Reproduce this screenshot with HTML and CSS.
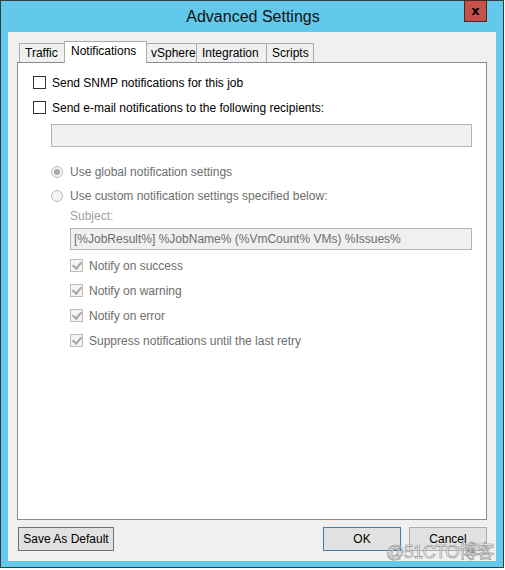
FILE: index.html
```html
<!DOCTYPE html>
<html lang="en">
<head>
  <meta charset="UTF-8" />
  <title>Advanced Settings</title>
  <link rel="stylesheet" href="styles.css">
</head>
<body>
  <div class="window">
    <div class="titlebar">
      <span class="title">Advanced Settings</span>
      <button class="close-btn">x</button>
    </div>

    <div class="client">
      <div class="tabs">
        <div class="tab">Traffic</div>
        <div class="tab active">Notifications</div>
        <div class="tab">vSphere</div>
        <div class="tab">Integration</div>
        <div class="tab">Scripts</div>
      </div>

      <div class="panel">
        <label class="row">
          <span class="check"></span>
          <span>Send SNMP notifications for this job</span>
        </label>
        <label class="row">
          <span class="check"></span>
          <span>Send e-mail notifications to the following recipients:</span>
        </label>
        <div class="textbox recipients"></div>

        <div class="options">
          <label class="row disabled first-radio">
            <span class="radio checked"></span>
            <span>Use global notification settings</span>
          </label>
          <label class="row disabled">
            <span class="radio"></span>
            <span>Use custom notification settings specified below:</span>
          </label>

          <div class="custom">
            <div class="subject-label">Subject:</div>
            <div class="textbox subject">[%JobResult%] %JobName% (%VmCount% VMs) %Issues%</div>
            <div class="checks">
              <label class="row small disabled">
                <span class="check checked"></span>
                <span>Notify on success</span>
              </label>
              <label class="row small disabled">
                <span class="check checked"></span>
                <span>Notify on warning</span>
              </label>
              <label class="row small disabled">
                <span class="check checked"></span>
                <span>Notify on error</span>
              </label>
              <label class="row small disabled">
                <span class="check checked"></span>
                <span>Suppress notifications until the last retry</span>
              </label>
            </div>
          </div>
        </div>
      </div>

      <div class="footer">
        <button class="btn default-btn">Save As Default</button>
        <div class="footer-right">
          <button class="btn primary">OK</button>
          <button class="btn">Cancel</button>
        </div>
      </div>
    </div>

    <div class="watermark">@51CTO博客</div>
  </div>
</body>
</html>
```

FILE: styles.css
```css
* {
  box-sizing: border-box;
}

body {
  margin: 0;
  background: #ffffff;
  font-family: "Liberation Sans", Arial, sans-serif;
  font-size: 12px;
  color: #000;
}

.window {
  position: relative;
  width: 504px;
  height: 568px;
  background: #62c9ea;
  border: 1px solid #2f3d44;
  padding: 0 7px 6px 7px;
  display: flex;
  flex-direction: column;
}

.titlebar {
  position: relative;
  height: 31px;
  display: flex;
  align-items: center;
  justify-content: center;
}

.title {
  font-size: 16px;
  color: #111;
  margin-left: 2px;
  margin-top: 1px;
}

.close-btn {
  position: absolute;
  top: -1px;
  right: 9px;
  width: 23px;
  height: 22px;
  background: #c7514a;
  border: 1px solid #4a2a28;
  color: #000;
  font-family: "DejaVu Sans", sans-serif;
  font-weight: bold;
  font-size: 13px;
  line-height: 16px;
  padding: 0;
}

.client {
  flex: 1;
  background: #f0f0f0;
  padding: 9px 9px 10px 9px;
  display: flex;
  flex-direction: column;
}

/* tabs */
.tabs {
  display: flex;
  align-items: flex-end;
  height: 21px;
  padding-left: 2px;
  position: relative;
  z-index: 1;
}

.tab {
  height: 19px;
  padding: 0 5px;
  border: 1px solid #acacac;
  border-bottom: none;
  border-left: none;
  background: #f0f0f0;
  line-height: 19px;
}

.tab:first-child {
  border-left: 1px solid #acacac;
  width: 46px;
}

.tab:nth-child(3) { width: 51px; }
.tab:nth-child(4) { width: 70px; }
.tab:nth-child(5) { width: 47px; }

.tab.active {
  width: 83px;
  height: 22px;
  margin-bottom: -1px;
  margin-left: -1px;
  margin-right: -1px;
  background: #fff;
  border: 1px solid #acacac;
  border-bottom: none;
  line-height: 18px;
  padding: 0 6px;
  position: relative;
  z-index: 2;
}

.panel {
  flex: 1;
  background: #fff;
  border: 1px solid #898c95;
  padding: 7px 0 0 15px;
}

.row {
  display: flex;
  align-items: center;
  height: 25px;
  gap: 6px;
}

.row.disabled {
  color: #6d6d6d;
}

.check {
  width: 13px;
  height: 13px;
  border: 1px solid #333;
  background: #fff;
  flex: none;
  position: relative;
}

.check.checked {
  border-color: #bcbcbc;
  background: #f4f4f4;
}

.check.checked::after {
  content: "";
  position: absolute;
  left: 3px;
  top: 0px;
  width: 4px;
  height: 7px;
  border: solid #a7a7a7;
  border-width: 0 2px 2px 0;
  transform: rotate(40deg);
}

.radio {
  width: 12px;
  height: 12px;
  border: 1px solid #bcbcbc;
  border-radius: 50%;
  background: #f4f4f4;
  flex: none;
  display: flex;
  align-items: center;
  justify-content: center;
}

.radio.checked::after {
  content: "";
  width: 6px;
  height: 6px;
  border-radius: 50%;
  background: #a8a8a8;
}

.textbox {
  height: 23px;
  border: 1px solid #b4b4b4;
  background: #f0f0f0;
}

.recipients {
  margin: 4px 0 0 18px;
  width: 421px;
}

.options {
  padding-left: 18px;
  margin-top: 13px;
}

.options .row {
  height: 24px;
  gap: 7px;
}

.custom {
  padding-left: 19px;
}

.subject-label {
  color: #a0a0a0;
  height: 16px;
  line-height: 16px;
}

.subject {
  margin-top: 4px;
  width: 402px;
  height: 22px;
  line-height: 20px;
  padding-left: 3px;
  color: #6d6d6d;
}

.checks {
  margin-top: 3px;
}

.checks .row {
  height: 25px;
  gap: 6px;
}

/* footer buttons */
.footer {
  display: flex;
  justify-content: space-between;
  align-items: flex-end;
  margin-top: 7px;
  padding-left: 1px;
}

.footer-right {
  display: flex;
  gap: 8px;
}

.btn {
  height: 24px;
  width: 78px;
  border: 1px solid #adadad;
  background: #e1e1e1;
  font-family: "Liberation Sans", Arial, sans-serif;
  font-size: 12px;
  color: #000;
  padding: 0;
}

.default-btn {
  width: 96px;
  border-color: #707070;
}

.btn.primary {
  border-color: #3c7fb1;
}

.watermark {
  position: absolute;
  right: 9px;
  bottom: 4px;
  font-family: "Liberation Sans", "Noto Sans CJK SC", sans-serif;
  font-size: 18px;
  color: rgba(255, 255, 255, 0.85);
  -webkit-text-stroke: 0.6px #8a8a8a;
  letter-spacing: -0.5px;
}
```
